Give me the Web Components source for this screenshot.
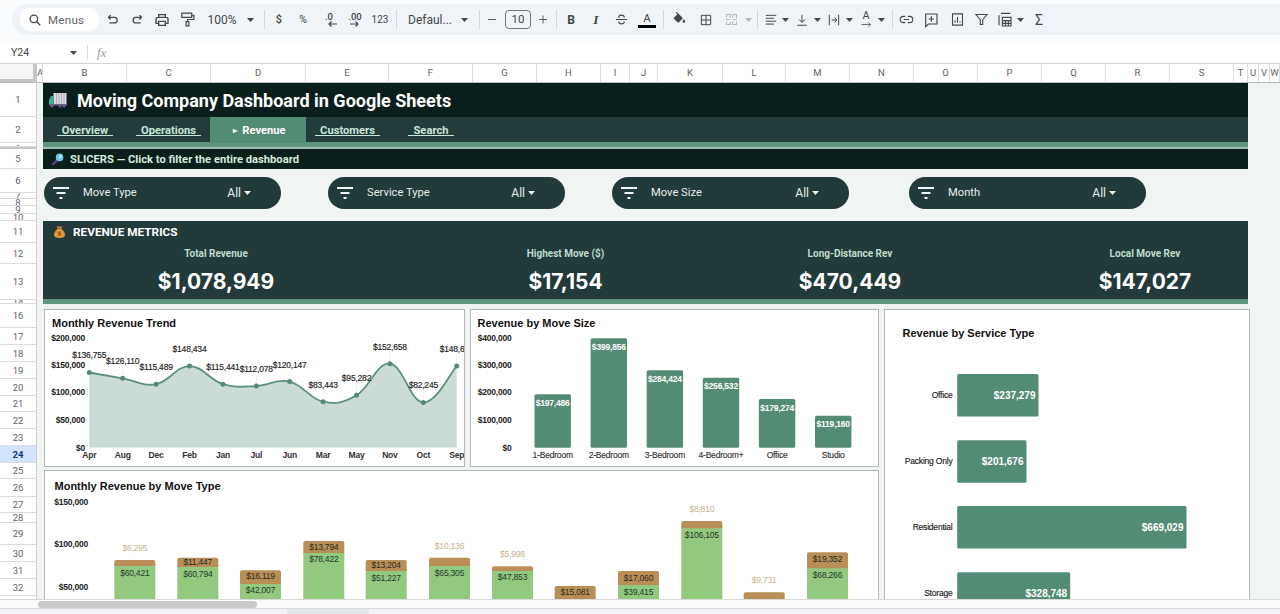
<!DOCTYPE html>
<html>
<head>
<meta charset="utf-8">
<title>Moving Company Dashboard</title>
<style>
html, body { margin: 0; height: 614px; overflow: hidden; background: #fbfcfd; }
body { display: flex; flex-direction: column; font-family: Roboto, "Liberation Sans", sans-serif; }
</style>
</head>
<body>
<sheet-toolbar></sheet-toolbar>
<formula-bar></formula-bar>
<column-header></column-header>
<sheet-body>
  <row-header slot="rows"></row-header>
  <dash-title>Moving Company Dashboard in Google Sheets</dash-title>
  <dash-nav>
    <nav-tab>Overview</nav-tab>
    <nav-tab>Operations</nav-tab>
    <nav-tab active>Revenue</nav-tab>
    <nav-tab>Customers</nav-tab>
    <nav-tab>Search</nav-tab>
  </dash-nav>
  <slicer-header>SLICERS — Click to filter the entire dashboard</slicer-header>
  <slicer-row>
    <slicer-pill>Move Type</slicer-pill>
    <slicer-pill>Service Type</slicer-pill>
    <slicer-pill>Move Size</slicer-pill>
    <slicer-pill>Month</slicer-pill>
  </slicer-row>
  <metrics-panel>
    <metric-tile label="Total Revenue">$1,078,949</metric-tile>
    <metric-tile label="Highest Move ($)" style="grid-column:3">$17,154</metric-tile>
    <metric-tile label="Long-Distance Rev">$470,449</metric-tile>
    <metric-tile label="Local Move Rev">$147,027</metric-tile>
  </metrics-panel>
  <chart-grid>
    <chart-card style="--pad:6px 7px 2px">
      <span slot="title">Monthly Revenue Trend</span>
      <line-chart></line-chart>
    </chart-card>
    <chart-card style="--pad:6px 7px 2px">
      <span slot="title">Revenue by Move Size</span>
      <column-chart></column-chart>
    </chart-card>
    <chart-card style="--pad:16px 18px 4px; grid-column:3; grid-row:1 / span 2">
      <span slot="title">Revenue by Service Type</span>
      <service-chart></service-chart>
    </chart-card>
    <chart-card style="--pad:8px 9.5px 0; grid-column:1 / span 2">
      <span slot="title">Monthly Revenue by Move Type</span>
      <stacked-chart></stacked-chart>
    </chart-card>
  </chart-grid>
</sheet-body>
<sheet-footer></sheet-footer>

<script>
"use strict"

const icon = (body, size = 16, extra = 'stroke-width="1.7"') =>
    `<svg width="${size}" height="${size}" viewBox="0 0 24 24" fill="none" stroke="#444746" ${extra}>${body}</svg>`;
const caret = `<svg width="7" height="4" viewBox="0 0 7 4"><path d="M0 0h7L3.5 4z" fill="#444746"/></svg>`;
const arrowLeft = `<svg width="9" height="6" viewBox="0 0 9 6" fill="none" stroke="#444746" stroke-width="1.2"><path d="M9 3H1M3.5.5L1 3l2.5 2.5"/></svg>`;
const arrowRight = `<svg width="9" height="6" viewBox="0 0 9 6" fill="none" stroke="#444746" stroke-width="1.2"><path d="M0 3h8M5.5.5L8 3 5.5 5.5"/></svg>`;

class SheetToolbar extends HTMLElement{
    constructor(){
        super();
        this.attachShadow({mode: "open"});
    }

    connectedCallback(){
        this.shadowRoot.innerHTML = `${this.render()} ${this.styles()}`;
    }

    // [centre x on the page, width, markup]
    items(){
        const sep = '<i class="sep"></i>';
        return [
            [112, 20, icon('<path d="M9 5L5.5 8.5 9 12M6 8.5h9a4.5 4.5 0 0 1 0 9H7"/>', 15, 'stroke-width="2"')],
            [137, 20, icon('<path d="M15 5l3.5 3.5L15 12M18 8.5h-8a4.5 4.5 0 0 0-1 9h8"/>', 15, 'stroke-width="2"')],
            [162, 20, icon('<path d="M7 8V4h10v4M7 17H3v-6a3 3 0 0 1 3-3h12a3 3 0 0 1 3 3v6h-4M7 14h10v6H7z"/>', 16, 'stroke-width="2"')],
            [187, 20, icon('<path d="M4 3h14v6H4zM18 6h3v6h-9v3M10 15h4v6h-4z"/>', 17)],
            [222, 34, '<span style="font-size:12px">100%</span>'],
            [250, 10, caret],
            [264, 2, sep],
            [279, 12, '<span style="font-size:11px;font-weight:500">$</span>'],
            [303, 14, '<span style="font-size:10.5px">%</span>'],
            [329, 16, `<span class="dec">.0${arrowLeft.replace('<svg', '<svg style="margin-left:6px"')}</span>`],
            [355, 18, `<span class="dec">.00${arrowRight}</span>`],
            [380, 18, '<span style="font-size:10px">123</span>'],
            [396, 2, sep],
            [430, 48, '<span style="font-size:12px">Defaul...</span>'],
            [464, 10, caret],
            [479, 2, sep],
            [492, 12, icon('<path d="M4 12h16"/>', 13)],
            [518, 26, '<span class="size">10</span>'],
            [543, 12, icon('<path d="M12 4v16M4 12h16"/>', 13)],
            [556, 2, sep],
            [571, 12, '<b style="font-size:12px">B</b>'],
            [596, 12, '<i style="font:italic 700 13.5px \'Liberation Serif\',serif">I</i>'],
            [621, 16, icon('<path d="M3 12h18M16.5 9c0-2-2-4-4.5-4S7.5 7 7.5 9M7.5 15c0 2 2 4 4.5 4s4.5-2 4.5-4"/>', 15)],
            [647, 18, '<span class="color">A<u></u></span>'],
            [663, 2, sep],
            [679, 16, `<svg width="15" height="15" viewBox="0 0 24 24"><path fill="#444746" d="M16.56 8.94L7.62 0 6.21 1.41l2.38 2.38-5.15 5.15c-.59.59-.59 1.54 0 2.12l5.5 5.5c.29.29.68.44 1.06.44s.77-.15 1.06-.44l5.5-5.5c.59-.58.59-1.53 0-2.12zM19 11.5s-2 2.17-2 3.5c0 1.1.9 2 2 2s2-.9 2-2c0-1.33-2-3.5-2-3.5z"/></svg>`],
            [706, 16, icon('<path d="M4 4h16v16H4zM12 4v16M4 12h16"/>', 14)],
            [731, 16, icon('<path d="M4 9V4h6v5M14 9V4h6v5M4 15v5h6v-5M14 15v5h6v-5M3 12h6M15 12h6" stroke="#b4b8bd"/>', 15)],
            [748, 8, caret.replace('#444746', '#b4b8bd')],
            [757, 2, sep],
            [771, 14, icon('<path d="M3 4h18M3 9h14M3 14h18M3 19h14"/>', 14)],
            [785, 8, caret],
            [802, 14, icon('<path d="M12 3v13M7 11l5 5 5-5M4 21h16"/>', 14)],
            [817, 8, caret],
            [834, 14, icon('<path d="M4 3v18M20 3v18M8 12h8M13 8l4 4-4 4"/>', 14)],
            [849, 8, caret],
            [866, 14, `<span class="rot">A${icon('<path d="M1 12h20M16 7l5 5-5 5"/>', 11)}</span>`],
            [881, 8, caret],
            [892, 2, sep],
            [906, 18, icon('<path d="M10 7H7a5 5 0 0 0 0 10h3M14 7h3a5 5 0 0 1 0 10h-3M8 12h8"/>', 15)],
            [931, 18, icon('<path d="M4 3h17v15H8l-4 4zM12.5 6.5v8M8.5 10.5h8"/>', 16)],
            [957, 16, icon('<path d="M4 3h16v18H4zM8 17v-4M12 17V8M16 17v-2"/>', 15)],
            [981, 16, icon('<path d="M3 4h18l-7 8v8h-4v-8z"/>', 15)],
            [1005, 16, icon('<path d="M3 20V5M6 2h14M8 8h13v13H8zM8 13h13M8 17h13M12.5 13v8M17 13v8"/>', 16)],
            [1020, 8, caret],
            [1039, 12, '<span style="font-size:14px">Σ</span>'],
        ];
    }

    render(){
        let right = 99;
        const cells = this.items().map(([centre, width, html]) => {
            const gap = centre - width / 2 - right;
            right = centre + width / 2;
            return `<div class="cell" style="width:${width}px;margin-left:${gap}px">${html}</div>`;
        }).join('');
        return `
            <div class="bar">
                <div class="menus">
                    ${icon('<circle cx="10" cy="10" r="6.5"/><path d="M15 15l6 6"/>', 14, 'stroke-width="2.2"')}
                    <span>Menus</span>
                </div>
                ${cells}
            </div>
        `
    }

    styles(){
        return `
        <style>
        :host{
            display: block;
            padding: 4px 0 0 12px;
            flex: none;
        }
        .bar{
            height: 31px;
            display: flex;
            align-items: center;
            background: #f0f4f9;
            border-radius: 16px 0 0 16px;
            padding-left: 8px;
            color: #444746;
            font-family: Roboto, "Liberation Sans", sans-serif;
        }
        .menus{
            width: 79px;
            height: 23px;
            flex: none;
            box-sizing: border-box;
            padding-left: 8px;
            display: flex;
            align-items: center;
            gap: 6px;
            background: #fff;
            border-radius: 12px;
            font-size: 11.5px;
            letter-spacing: .3px;
            color: #5f6368;
        }
        .cell{
            flex: none;
            display: flex;
            justify-content: center;
            align-items: center;
            white-space: nowrap;
            font-size: 12px;
        }
        .sep{
            display: block;
            width: 1px;
            height: 19px;
            background: #d3d6da;
        }
        .dec{
            display: flex;
            flex-direction: column;
            align-items: center;
            font: 500 9.5px/8px Roboto, sans-serif;
        }
        .size{
            width: 26px;
            height: 19px;
            box-sizing: border-box;
            border: 1px solid #747775;
            border-radius: 4px;
            text-align: center;
            line-height: 17px;
            font-size: 11.5px;
        }
        .color{
            display: flex;
            flex-direction: column;
            align-items: center;
            font-size: 11.5px;
            line-height: 13px;
        }
        .color u{
            width: 18px;
            height: 3px;
            background: #000;
        }
        .rot{
            display: flex;
            flex-direction: column;
            align-items: center;
            font-size: 11px;
            line-height: 11px;
        }
        .rot svg{ margin-top: -2px; }
        </style>
        `
    }
}

class FormulaBar extends HTMLElement{
    constructor(){
        super();
        this.attachShadow({mode: "open"});
    }

    connectedCallback(){
        this.shadowRoot.innerHTML = `
            <div class="name">Y24</div>
            ${caret}
            <i class="sep"></i>
            <em>fx</em>
            <style>
            :host{
                display: flex;
                align-items: center;
                flex: none;
                height: 21px;
                margin-top: 7px;
                background: #fff;
                font-family: Roboto, "Liberation Sans", sans-serif;
                color: #444746;
            }
            .name{ width: 56px; padding-left: 11px; font-size: 10.5px; }
            .sep{ width: 1px; height: 15px; margin: 0 9px 0 10px; background: #dadce0; }
            em{ font: italic 13px "Liberation Serif", serif; color: #9aa0a6; }
            svg{ margin-left: 3px; }
            </style>
        `;
    }
}

class ColumnHeader extends HTMLElement{
    constructor(){
        super();
        this.attachShadow({mode: "open"});
    }

    connectedCallback(){
        const cols = [['A',6],['B',84],['C',84],['D',95],['E',83],['F',84],['G',64],['H',64],['I',29],['J',28],['K',65],['L',63],['M',64],['N',64],['O',64],['P',64],['Q',64],['R',64],['S',64],['T',14],['U',11],['V',11],['W',10]];
        this.shadowRoot.innerHTML = `
            <div class="corner"></div>
            ${cols.map(([name, width]) => `<div class="col" style="width:${width}px">${name}</div>`).join('')}
            <style>
            :host{
                display: flex;
                flex: none;
                height: 18px;
                background: #fff;
                border-top: 1px solid #d4d4d4;
                font: 9.5px/18px Roboto, "Liberation Sans", sans-serif;
                color: #5f6368;
            }
            .corner{
                width: 33px;
                flex: none;
                background: #f4f5f5;
                border-right: 4px solid #c4c4c4;
                border-bottom: 3px solid #c4c4c4;
                box-sizing: content-box;
                height: 15px;
            }
            .col{
                flex: none;
                box-sizing: border-box;
                text-align: center;
                border-right: 1px solid #dcdcdc;
                overflow: hidden;
            }
            </style>
        `;
    }
}

class RowHeader extends HTMLElement{
    constructor(){
        super();
        this.attachShadow({mode: "open"});
    }

    connectedCallback(){
        const rows = [[1,34],[2,26],['-',4],['',2,'fold'],[5,20],[6,24],[7,6],[8,7],[9,8],[10,7],[11,22],[12,21],[13,36],[14,4],[16,24],
            [17,17],[18,17],[19,17],[20,17],[21,16],[22,17],[23,17],[24,17,'on'],[25,16],[26,18],[27,16],[28,10],[29,22],[30,17],[31,17],[32,17],[33,17]];
        this.shadowRoot.innerHTML = `
            ${rows.map(([name, height, cls]) => `<div class="row ${cls || ''}" style="height:${height}px;line-height:${height}px">${name}</div>`).join('')}
            <style>
            :host{
                display: block;
                width: 36px;
                height: 100%;
                overflow: hidden;
                background: #fff;
                border-right: 1px solid #cfcfcf;
                font: 9.5px Roboto, "Liberation Sans", sans-serif;
                color: #5f6368;
            }
            .row{
                box-sizing: border-box;
                text-align: center;
                overflow: hidden;
                border-bottom: 1px solid #dcdcdc;
            }
            .fold{ background: #c4c4c4; border: 0; }
            .on{ background: #d3e3fd; color: #0b3a80; font-weight: 700; }
            </style>
        `;
    }
}

class SheetBody extends HTMLElement{
    constructor(){
        super();
        this.attachShadow({mode: "open"});
    }

    connectedCallback(){
        this.shadowRoot.innerHTML = `
            <slot name="rows"></slot>
            <div class="canvas"><slot></slot></div>
            <style>
            :host{
                display: flex;
                flex: 1;
                min-height: 0;
                overflow: hidden;
                background: #f0f4f3;
                border-top: 1px solid #bdbdbd;
            }
            .canvas{
                flex: 1;
                min-width: 0;
                padding-left: 6px;
                overflow: hidden;
            }
            </style>
        `;
    }
}

class DashTitle extends HTMLElement{
    constructor(){
        super();
        this.attachShadow({mode: "open"});
    }

    connectedCallback(){
        this.shadowRoot.innerHTML = `
            <svg width="18" height="16" viewBox="0 0 18 16">
                <rect x="4.5" y="1" width="13" height="11" fill="#dcd9e0"/>
                <path d="M7.5 1v11M10 1v11M12.5 1v11M15 1v11" stroke="#a9a4b3" stroke-width=".8"/>
                <path d="M0 13V8l2-4h2.5v9z" fill="#37b39a"/>
                <rect x="0" y="12" width="18" height="1.5" fill="#6c6a7a"/>
                <circle cx="3" cy="14" r="1.6" fill="#6a58a0"/><circle cx="11" cy="14" r="1.6" fill="#6a58a0"/><circle cx="15" cy="14" r="1.6" fill="#6a58a0"/>
            </svg>
            <span><slot></slot></span>
            <style>
            :host{
                display: flex;
                align-items: center;
                width: 1205px;
                height: 34px;
                box-sizing: border-box;
                padding-left: 6px;
                gap: 10px;
                background: #0a1f1c;
                color: #fff;
                font: 700 18px Roboto, "Liberation Sans", sans-serif;
            }
            </style>
        `;
    }
}

class DashNav extends HTMLElement{
    constructor(){
        super();
        this.attachShadow({mode: "open"});
    }

    connectedCallback(){
        this.shadowRoot.innerHTML = `
            <slot></slot>
            <style>
            :host{
                display: grid;
                grid-template-columns: 84px 83px 96px 83px 84px;
                width: 1205px;
                height: 30px;
                box-sizing: border-box;
                background: linear-gradient(#243b3b 25px, #5e957f 25px, #5e957f 30px);
            }
            </style>
        `;
    }
}

class NavTab extends HTMLElement{
    constructor(){
        super();
        this.attachShadow({mode: "open"});
    }

    connectedCallback(){
        this.shadowRoot.innerHTML = `
            <span class="label">${this.hasAttribute('active') ? '<b>▸</b>' : ''}<slot></slot></span>
            <style>
            :host{
                display: flex;
                justify-content: center;
                height: 26px;
                padding-top: 7px;
                box-sizing: border-box;
                font: 700 11.2px/13px Roboto, "Liberation Sans", sans-serif;
                color: #c7e5d7;
            }
            :host([active]){
                background: #538c74;
                color: #fff;
                padding-left: 3px;
            }
            .label{
                height: 11px;
                padding: 0 5px;
                border-bottom: 1px solid #c7e5d7;
            }
            :host([active]) .label{ border: 0; }
            b{ font-size: 8px; margin-right: 5px; vertical-align: 1px; }
            </style>
        `;
    }
}

class SlicerHeader extends HTMLElement{
    constructor(){
        super();
        this.attachShadow({mode: "open"});
    }

    connectedCallback(){
        this.shadowRoot.innerHTML = `
            <svg width="12" height="12" viewBox="0 0 12 12">
                <path d="M1 11.2L5 7.4" stroke="#5a3f8c" stroke-width="2.2" stroke-linecap="round"/>
                <circle cx="7.6" cy="4.4" r="3.8" fill="#6fc6ea"/>
                <circle cx="8.4" cy="3.6" r="1.6" fill="#bde8f7"/>
            </svg>
            <span><slot></slot></span>
            <style>
            :host{
                display: flex;
                align-items: center;
                gap: 6px;
                width: 1205px;
                height: 22px;
                box-sizing: border-box;
                border-top: 2px solid #9cbfae;
                padding-left: 9px;
                background: #0a1f1c;
                color: #d4ebdf;
                font: 700 11.2px Roboto, "Liberation Sans", sans-serif;
            }
            </style>
        `;
    }
}

class SlicerRow extends HTMLElement{
    constructor(){
        super();
        this.attachShadow({mode: "open"});
    }

    connectedCallback(){
        this.shadowRoot.innerHTML = `
            <slot></slot>
            <style>
            :host{
                display: grid;
                grid-template-columns: 284px 284px 297px 237px;
                padding: 8px 0 12.5px 1px;
            }
            </style>
        `;
    }
}

class SlicerPill extends HTMLElement{
    constructor(){
        super();
        this.attachShadow({mode: "open"});
    }

    connectedCallback(){
        this.shadowRoot.innerHTML = `
            <svg width="16" height="12" viewBox="0 0 16 12" fill="none" stroke="#f1f5f3" stroke-width="2">
                <path d="M0 1h16M3.5 6h9M6.5 11h3"/>
            </svg>
            <span class="name"><slot></slot></span>
            <span class="value">All</span>
            <svg width="7" height="4" viewBox="0 0 7 4"><path d="M0 0h7L3.5 4z" fill="#e6eeea"/></svg>
            <style>
            :host{
                display: flex;
                align-items: center;
                width: 237px;
                height: 31.5px;
                box-sizing: border-box;
                padding: 0 30px 0 9px;
                border-radius: 16px;
                background: #233a3a;
                color: #e6eeea;
                font: 11.2px Roboto, "Liberation Sans", sans-serif;
            }
            .name{ flex: 1; margin-left: 14px; }
            .value{ margin-right: 3px; font-size: 12px; }
            </style>
        `;
    }
}

class MetricsPanel extends HTMLElement{
    constructor(){
        super();
        this.attachShadow({mode: "open"});
    }

    connectedCallback(){
        this.shadowRoot.innerHTML = `
            <div class="head">
                <svg width="11" height="12" viewBox="0 0 11 12">
                    <path d="M3.6 2.6L2.6.6h5.8l-1 2z" fill="#c98a3c"/>
                    <path d="M3.6 2.8h3.8C9.6 4.6 11 7 11 8.8 11 11 9 12 5.5 12S0 11 0 8.8C0 7 1.4 4.6 3.6 2.8z" fill="#e2963c"/>
                    <path d="M7 6H4.6v1.6h1.8v1.6H4" fill="none" stroke="#7a4a12" stroke-width=".9"/>
                </svg>
                REVENUE METRICS
            </div>
            <div class="tiles"><slot></slot></div>
            <style>
            :host{
                display: block;
                width: 1205px;
                height: 78px;
                border-bottom: 5px solid #5e957f;
                background: #233a3a;
                font-family: Roboto, "Liberation Sans", sans-serif;
            }
            .head{
                display: flex;
                align-items: center;
                gap: 8px;
                height: 22px;
                padding-left: 11px;
                color: #fff;
                font-size: 11.8px;
                font-weight: 700;
            }
            .tiles{
                display: grid;
                grid-template-columns: 346px 84px 185px 384px 206px;
            }
            </style>
        `;
    }
}

class MetricTile extends HTMLElement{
    constructor(){
        super();
        this.attachShadow({mode: "open"});
    }

    connectedCallback(){
        this.shadowRoot.innerHTML = `
            <div class="label">${this.getAttribute('label')}</div>
            <div class="value"><slot></slot></div>
            <style>
            :host{
                display: block;
                text-align: center;
            }
            .label{
                height: 21px;
                line-height: 21px;
                font-size: 10px;
                font-weight: 700;
                color: #bfdccd;
            }
            .value{
                height: 36px;
                font: 700 21px/36px Inter, Roboto, sans-serif;
                color: #fff;
            }
            </style>
        `;
    }
}

class ChartGrid extends HTMLElement{
    constructor(){
        super();
        this.attachShadow({mode: "open"});
    }

    connectedCallback(){
        this.shadowRoot.innerHTML = `
            <slot></slot>
            <style>
            :host{
                display: grid;
                grid-template-columns: 420.5px 409px 366px;
                grid-template-rows: 158px 170px;
                column-gap: 5px;
                row-gap: 3px;
                margin: 5px 0 0 1px;
            }
            </style>
        `;
    }
}

class ChartCard extends HTMLElement{
    constructor(){
        super();
        this.attachShadow({mode: "open"});
    }

    connectedCallback(){
        this.shadowRoot.innerHTML = `
            <div class="title"><slot name="title"></slot></div>
            <slot></slot>
            <style>
            :host{
                display: block;
                box-sizing: border-box;
                overflow: hidden;
                background: #fff;
                border: 1px solid #b5b8b8;
            }
            .title{
                padding: var(--pad);
                font: 700 11px/14px "Liberation Sans", sans-serif;
                color: #111;
            }
            </style>
        `;
    }
}

// base for the charts: an svg whose viewBox is in page coordinates
class ChartElement extends HTMLElement{
    constructor(){
        super();
        this.attachShadow({mode: "open"});
    }

    connectedCallback(){
        const [x, y, w, h] = this.box();
        this.shadowRoot.innerHTML = `
            <svg width="${w}" height="${h}" viewBox="${x} ${y} ${w} ${h}">${this.draw()}</svg>
            <style>
            :host{ display: block; }
            svg{ display: block; }
            text{
                font-family: "Liberation Sans", sans-serif;
                font-size: 8.5px;
                letter-spacing: -.2px;
                dominant-baseline: central;
            }
            .axis{ font-weight: 700; fill: #222; text-anchor: end; }
            .cat{ font-weight: 700; fill: #333; text-anchor: middle; }
            .val{ fill: #222; text-anchor: middle; stroke: #222; stroke-width: .15; }
            .in{ font-weight: 700; fill: #fff; text-anchor: middle; }
            </style>
        `;
    }

    axis(labels, x){
        return labels.map(([text, y]) => `<text class="axis" x="${x}" y="${y}">${text}</text>`).join('');
    }
}

class LineChart extends ChartElement{
    box(){ return [45, 332, 418.5, 134]; }

    draw(){
        const names = ['Apr','Aug','Dec','Feb','Jan','Jul','Jun','Mar','May','Nov','Oct','Sep'];
        const values = [136755,126110,115489,148434,115441,112078,120147,83443,95282,152658,82245,148600];
        const labels = ['$136,755','$126,110','$115,489','$148,434','$115,441','$112,078','$120,147','$83,443','$95,282','$152,658','$82,245','$148,600'];
        const base = 447.5;
        const pts = values.map((v, i) => [89.3 + i * 33.4, base - v / 200000 * 109.7]);
        let curve = `M${pts[0][0]} ${pts[0][1]}`;
        pts.slice(1).forEach((p, i) => {
            const p0 = pts[Math.max(i - 1, 0)], p1 = pts[i], p3 = pts[Math.min(i + 2, pts.length - 1)];
            const k = .2;
            curve += `C${p1[0] + (p[0] - p0[0]) * k} ${p1[1] + (p[1] - p0[1]) * k} ${p[0] - (p3[0] - p1[0]) * k} ${p[1] - (p3[1] - p1[1]) * k} ${p[0]} ${p[1]}`;
        });
        const area = `${curve}L${pts[11][0]} ${base}L${pts[0][0]} ${base}Z`;
        return `
            ${this.axis([['$200,000',337.7],['$150,000',365],['$100,000',392.3],['$50,000',420],['$0',447.5]], 85)}
            <path d="${area}" fill="#cbdbd5"/>
            <path d="${curve}" fill="none" stroke="#5e917d" stroke-width="1.8"/>
            ${pts.map(([x, y], i) => `
                <path d="M${x} ${y - 11}V${y}" stroke="#e3e8e6" stroke-width=".6"/>
                <circle cx="${x}" cy="${y}" r="2.5" fill="#568a75"/>
                <text class="val" x="${x}" y="${y - 17}">${labels[i]}</text>
                <text class="cat" x="${x}" y="455.3">${names[i]}</text>`).join('')}
        `;
    }
}

class ColumnChart extends ChartElement{
    box(){ return [470.5, 332, 407, 134]; }

    draw(){
        const data = [['1-Bedroom','$197,486',394.3],['2-Bedroom','$399,856',338.3],['3-Bedroom','$284,424',370.3],['4-Bedroom+','$256,532',377.7],['Office','$179,274',399],['Studio','$119,160',415.7]];
        return `
            ${this.axis([['$400,000',337.7],['$300,000',365],['$200,000',392.3],['$100,000',420],['$0',447.5]], 511)}
            ${data.map(([name, label, top], i) => {
                const x = 534 + i * 56.1;
                return `
                <rect x="${x}" y="${top}" width="36.4" height="${447.7 - top}" rx="1.5" fill="#538c74"/>
                <text class="in" x="${x + 18.2}" y="${top + 8.5}">${label}</text>
                <text class="cat" x="${x + 18.2}" y="455.3" style="font-weight:400;stroke:#333;stroke-width:.15">${name}</text>`;
            }).join('')}
        `;
    }
}

class ServiceChart extends ChartElement{
    box(){ return [884.5, 344, 364, 255]; }

    draw(){
        const data = [['Office','$237,279',374,1038],['Packing Only','$201,676',440.3,1026],['Residential','$669,029',506,1186],['Storage','$328,748',572.3,1069.7]];
        return data.map(([name, label, top, right]) => `
            <rect x="956.7" y="${top}" width="${right - 956.7}" height="42.5" rx="1.5" fill="#538c74"/>
            <text x="952" y="${top + 21}" style="text-anchor:end;fill:#222;stroke:#222;stroke-width:.15">${name}</text>
            <text x="${right - 3}" y="${top + 21}" style="text-anchor:end;fill:#fff;font-size:10px;letter-spacing:0;font-weight:700">${label}</text>
        `).join('');
    }
}

class StackedChart extends ChartElement{
    box(){ return [44, 493, 834, 106]; }

    draw(){
        // x, top, split of brown / green, brown label + y, green label + y
        const bars = [
            [113.3,560,566,'$6,295',548,'$60,421',572.7],
            [176.3,557.7,567,'$11,447',562,'$60,794',574.3],
            [239,570.3,584,'$16,119',576,'$42,007',590],
            [302.3,541,553,'$13,794',546.7,'$78,422',559.3],
            [364.7,560,571,'$13,204',565,'$51,227',578.3],
            [428,557.7,566,'$10,136',546,'$65,305',573.3],
            [491,566.3,571,'$5,998',554,'$47,853',577.3],
            [553.7,586,620,'$15,081',592],
            [617,571,585,'$17,060',577.7,'$39,415',592],
            [680.3,521,528.3,'$8,810',508.7,'$106,105',535.3],
            [742.7,592.3,620,'$9,731',580],
            [806,552.3,568.3,'$19,352',558.7,'$68,266',575.3],
        ];
        return `
            ${this.axis([['$150,000',501.7],['$100,000',544.3],['$50,000',586.7]], 87)}
            ${bars.map(([x, top, split, brown, by, green, gy]) => `
                <rect x="${x}" y="${split - 2}" width="41" height="${640 - split}" fill="#93c97f"/>
                <path d="M${x} ${split}V${top + 2}q0-2 2-2h37q2 0 2 2V${split}z" fill="#b98f57"/>
                <text x="${x + 20.5}" y="${by}" style="text-anchor:middle;fill:${by < top ? '#c9b08f' : '#2a2a1e'}">${brown}</text>
                ${green ? `<text x="${x + 20.5}" y="${gy}" style="text-anchor:middle;fill:#1f3a2a">${green}</text>` : ''}
            `).join('')}
        `;
    }
}

class SheetFooter extends HTMLElement{
    constructor(){
        super();
        this.attachShadow({mode: "open"});
    }

    connectedCallback(){
        this.shadowRoot.innerHTML = `
            <div class="track"><div class="thumb"></div></div>
            <div class="tabs"><div class="tab"></div></div>
            <style>
            :host{ display: block; flex: none; }
            .track{
                height: 10px;
                padding: 1px 0 0 38px;
                box-sizing: border-box;
                background: #fafbfb;
                border-top: 1px solid #d9d9d9;
                border-bottom: 1px solid #dcdcdc;
            }
            .thumb{
                width: 219px;
                height: 7px;
                border-radius: 4px;
                background: #c9c9c9;
            }
            .tabs{
                height: 5px;
                padding-left: 287px;
                background: #f0f2f5;
            }
            .tab{ width: 82px; height: 5px; background: #e2e5e9; }
            </style>
        `;
    }
}

customElements.define('sheet-toolbar', SheetToolbar);
customElements.define('formula-bar', FormulaBar);
customElements.define('column-header', ColumnHeader);
customElements.define('row-header', RowHeader);
customElements.define('sheet-body', SheetBody);
customElements.define('dash-title', DashTitle);
customElements.define('dash-nav', DashNav);
customElements.define('nav-tab', NavTab);
customElements.define('slicer-header', SlicerHeader);
customElements.define('slicer-row', SlicerRow);
customElements.define('slicer-pill', SlicerPill);
customElements.define('metrics-panel', MetricsPanel);
customElements.define('metric-tile', MetricTile);
customElements.define('chart-grid', ChartGrid);
customElements.define('chart-card', ChartCard);
customElements.define('line-chart', LineChart);
customElements.define('column-chart', ColumnChart);
customElements.define('service-chart', ServiceChart);
customElements.define('stacked-chart', StackedChart);
customElements.define('sheet-footer', SheetFooter);
</script>
</body>
</html>
